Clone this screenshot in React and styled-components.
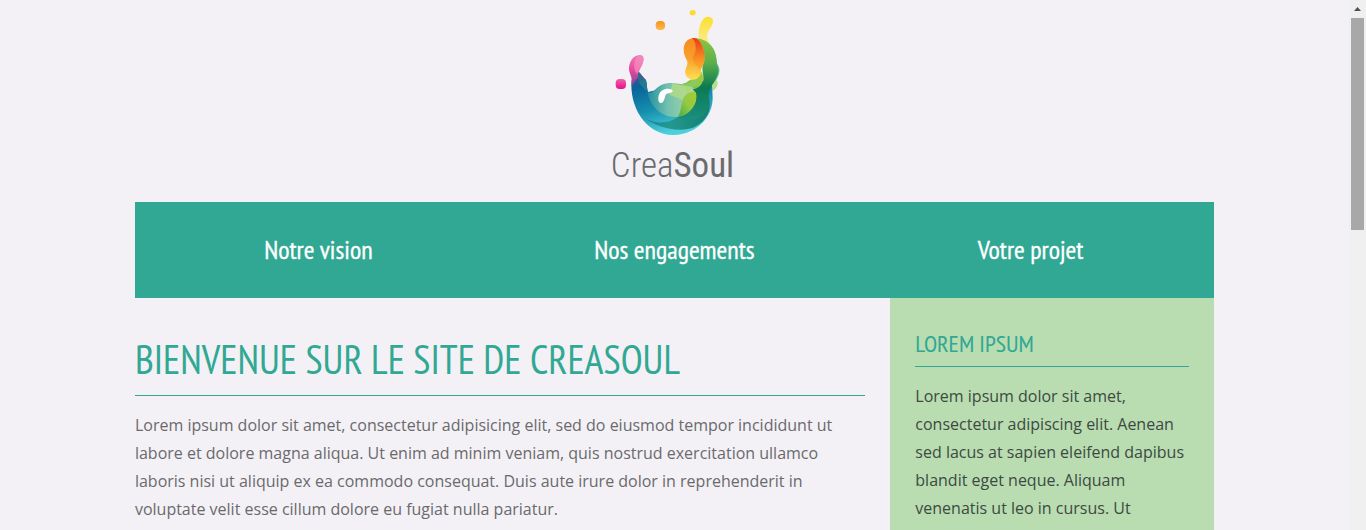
import React from "react";
import styled, { createGlobalStyle } from "styled-components";

const narrow = `"PT Sans Narrow", "Roboto Condensed", sans-serif`;
const teal = "#30a893";

const GlobalStyle = createGlobalStyle`
  *, *::before, *::after { box-sizing: border-box; }
  body {
    margin: 0;
    background: #f3f1f6;
    color: #6a6a6c;
    font: 16px/28px "Open Sans", sans-serif;
  }
`;

const Viewport = styled.div`
  display: flex;
  height: 100vh;
  overflow: hidden;
`;

const Page = styled.div`
  flex: 1;
  min-width: 0;
  height: 100%;
  overflow: hidden;
`;

const Container = styled.div`
  width: 80%;
  margin: 0 auto;
`;

const Header = styled.header`
  display: flex;
  justify-content: center;
  padding: 8px 4px 16px 0;
`;

const Brand = styled.a`
  display: flex;
  flex-direction: column;
  align-items: center;
  color: #696b6e;
  text-decoration: none;
`;

const BrandName = styled.span`
  margin-top: 8px;
  font: 300 35px/40px "Roboto Condensed", "Roboto", sans-serif;
`;

const BrandStrong = styled.span`
  font-weight: 400;
`;

const Nav = styled.nav`
  display: flex;
  justify-content: center;
  padding: 24px 0;
  background: ${teal};
`;

const NavLink = styled.a`
  width: 33%;
  color: #fff;
  font: 26px/48px ${narrow};
  text-align: center;
  text-decoration: none;
  -webkit-text-stroke: 0.3px #fff;
`;

const Columns = styled.div`
  display: flex;
  align-items: stretch;
`;

const Main = styled.main`
  width: 70%;
  padding: 28px 25px 25px 0;
`;

const Aside = styled.aside`
  width: 30%;
  padding: 25px;
  background: #b9dcb1;
  color: #3c4a42;
`;

const Title = styled.h1`
  margin: 0 0 15px;
  padding-bottom: 2px;
  border-bottom: 1px solid ${teal};
  color: ${teal};
  font: 40px/67px ${narrow};
  text-transform: uppercase;
`;

const AsideTitle = styled(Title).attrs({ as: "h2" })`
  font-size: 24px;
  line-height: 41px;
`;

const Text = styled.p`
  margin: 0;
`;

const ScrollTrack = styled.div`
  display: flex;
  flex-direction: column;
  align-items: center;
  flex: 0 0 17px;
  background: #f0f0f0;
`;

const ScrollArrow = styled.svg`
  display: block;
  width: 17px;
  height: 18px;
`;

const ScrollThumb = styled.div`
  width: 13px;
  height: 40%;
  background: #a8a8a8;
`;

function Logo() {
  return (
    <svg width="124" height="130" viewBox="34 24 372 390" aria-hidden="true">
      <defs>
        <linearGradient id="bowl" x1="0" y1="0" x2=".35" y2="1">
          <stop offset="0" stopColor="#4c4c92" />
          <stop offset=".22" stopColor="#08639b" />
          <stop offset=".6" stopColor="#168fae" />
          <stop offset="1" stopColor="#4ed0dc" />
        </linearGradient>
        <linearGradient id="sea" x1="0" y1="0" x2="1" y2="0">
          <stop offset="0" stopColor="#0b7fa6" />
          <stop offset=".45" stopColor="#25988f" />
          <stop offset="1" stopColor="#137f70" />
        </linearGradient>
        <linearGradient id="arm" x1="0" y1="0" x2="0" y2="1">
          <stop offset="0" stopColor="#8cc63f" />
          <stop offset=".3" stopColor="#5bae4d" />
          <stop offset=".6" stopColor="#0c7a50" />
          <stop offset="1" stopColor="#1b8f80" />
        </linearGradient>
        <linearGradient id="inner" x1="0" y1="0" x2="1" y2="0">
          <stop offset="0" stopColor="#258f9f" />
          <stop offset=".4" stopColor="#6fc0ae" />
          <stop offset="1" stopColor="#b4d9a6" />
        </linearGradient>
        <linearGradient id="lime" x1="1" y1="0" x2="0" y2="1">
          <stop offset="0" stopColor="#a8cc2c" />
          <stop offset=".5" stopColor="#93c944" />
          <stop offset="1" stopColor="#43ad49" />
        </linearGradient>
        <linearGradient id="pink" x1="0" y1="0" x2="0" y2="1">
          <stop offset="0" stopColor="#ee7db5" />
          <stop offset=".45" stopColor="#ea4a9e" />
          <stop offset="1" stopColor="#7d4594" />
        </linearGradient>
        <linearGradient id="orange" x1="0" y1="0" x2="0" y2="1">
          <stop offset="0" stopColor="#f58a1f" />
          <stop offset=".5" stopColor="#f9a12b" />
          <stop offset="1" stopColor="#ffdf55" />
        </linearGradient>
        <linearGradient id="red" x1="0" y1="0" x2="0" y2="1">
          <stop offset="0" stopColor="#e8391f" />
          <stop offset=".6" stopColor="#f68a1f" />
          <stop offset="1" stopColor="#f9b233" />
        </linearGradient>
        <linearGradient id="yellow" x1="0" y1="0" x2="0" y2="1">
          <stop offset="0" stopColor="#fbe02f" />
          <stop offset="1" stopColor="#fbee9a" />
        </linearGradient>
        <linearGradient id="amber" x1="0" y1="0" x2="0" y2="1">
          <stop offset="0" stopColor="#f7941e" />
          <stop offset="1" stopColor="#fdb94e" />
        </linearGradient>
        <linearGradient id="magenta" x1="0" y1="0" x2="0" y2="1">
          <stop offset="0" stopColor="#f060ad" />
          <stop offset="1" stopColor="#e6128c" />
        </linearGradient>
      </defs>
      <rect x="168" y="63" width="28" height="27" rx="12" fill="url(#amber)" />
      <rect x="270" y="30" width="18" height="16" rx="8" fill="#fbdc34" />
      <rect x="48" y="237" width="31" height="30" rx="12" fill="url(#magenta)" />
      <path fill="url(#yellow)" d="M298 118C294 95 301 66 313 55C323 46 339 50 340 62C341 79 326 89 323 101C320 114 328 124 333 140L310 138Z" />
      <path fill="#b5dd90" d="M338 245C346 229 349 240 354 245C356 257 347 270 337 273Z" />
      <path fill="#5dbf9b" d="M340 150C352 168 349 187 355 196C363 210 359 224 350 240L332 256Z" />
      <path fill="url(#bowl)" d="M96 240C88 315 135 405 222 405C292 404 340 350 339 292L337 255L300 240L145 276C141 258 142 240 121 222Z" />
      <path fill="url(#sea)" d="M108 330C145 375 199 376 235 351L292 272L338 240C327 262 324 280 328 296C336 329 324 360 284 382C239 400 157 385 108 330Z" />
      <path fill="url(#arm)" d="M288 115C325 116 350 145 351 183C351 198 358 205 355 219C348 247 326 263 326 290C329 320 325 336 305 350C281 365 254 362 235 352C253 322 239 300 267 278C285 266 307 262 311 240C313 222 304 208 311 188Z" />
      <path fill="url(#inner)" d="M144 276C158 286 166 264 185 255C212 243 239 252 256 256C285 262 296 285 286 310C274 336 250 351 225 351C180 350 150 316 144 276Z" />
      <path fill="url(#lime)" d="M288 276C298 305 273 346 235 351C250 324 239 298 264 281C273 275 281 275 288 276Z" />
      <path fill="url(#lime)" d="M236 252C256 260 263 241 276 238C292 232 300 224 305 214C315 234 312 257 288 266C275 271 282 257 258 254Z" />
      <path fill="#89ca64" d="M234 251C260 254 281 248 294 235C307 258 269 264 260 281C258 275 268 264 234 251Z" />
      <path fill="#b5dc83" d="M218 250C237 258 272 255 284 266C265 274 253 283 249 299L210 285Z" opacity=".75" />
      <path fill="url(#pink)" d="M96 242C97 225 84 218 89 196C94 174 108 164 122 165C135 167 133 181 128 193C123 205 116 213 116 225C117 235 104 242 96 260Z" />
      <path fill="#f391bf" d="M106 212C99 188 110 166 123 165C138 168 130 188 126 199C120 210 113 216 114 225Z" opacity=".7" />
      <path fill="#37668f" d="M115 219C117 208 127 229 137 237C145 250 139 266 145 276C127 263 111 244 115 219Z" />
      <path fill="#168493" d="M137 237C145 250 139 266 145 276C132 267 123 256 118 246C128 246 135 242 137 237Z" opacity=".75" />
      <path fill="url(#orange)" d="M252 151C251 127 265 113 289 114C306 119 317 154 315 181C311 199 302 205 304 220C300 235 282 245 270 236C258 232 254 220 258 207C264 192 266 188 258 174Q252 164 252 151Z" />
      <path fill="url(#red)" d="M276 114C296 111 306 129 313 154C319 179 308 198 301 211C295 199 280 193 279 177C280 166 289 159 288 145C288 128 284 119 276 114Z" />
      <path fill="#fff" d="M178 306C172 292 179 270 198 267C207 265 221 268 219 274C215 282 201 277 197 287C194 300 190 309 184 309Q180 309 178 306Z" />
    </svg>
  );
}

const links = ["Notre vision", "Nos engagements", "Votre projet"];

export default function App() {
  return (
    <>
      <GlobalStyle />
      <Viewport>
        <Page>
          <Container>
            <Header>
              <Brand href="#">
                <Logo />
                <BrandName>
                  Crea<BrandStrong>Soul</BrandStrong>
                </BrandName>
              </Brand>
            </Header>
            <Nav>
              {links.map((label) => (
                <NavLink key={label} href="#">
                  {label}
                </NavLink>
              ))}
            </Nav>
            <Columns>
              <Main>
                <Title>Bienvenue sur le site de CreaSoul</Title>
                <Text>
                  Lorem ipsum dolor sit amet, consectetur adipisicing elit, sed do eiusmod tempor
                  incididunt ut labore et dolore magna aliqua. Ut enim ad minim veniam, quis nostrud
                  exercitation ullamco laboris nisi ut aliquip ex ea commodo consequat. Duis aute
                  irure dolor in reprehenderit in voluptate velit esse cillum dolore eu fugiat nulla
                  pariatur.
                </Text>
              </Main>
              <Aside>
                <AsideTitle>Lorem ipsum</AsideTitle>
                <Text>
                  Lorem ipsum dolor sit amet, consectetur adipiscing elit. Aenean sed lacus at
                  sapien eleifend dapibus blandit eget neque. Aliquam venenatis ut leo in cursus. Ut
                  hendrerit massa a diam nulla sed.
                </Text>
              </Aside>
            </Columns>
          </Container>
        </Page>
        <ScrollTrack aria-hidden="true">
          <ScrollArrow viewBox="0 0 17 18">
            <path d="M5 11L8.500 7L12 11Z" fill="#505050" />
          </ScrollArrow>
          <ScrollThumb />
        </ScrollTrack>
      </Viewport>
    </>
  );
}
